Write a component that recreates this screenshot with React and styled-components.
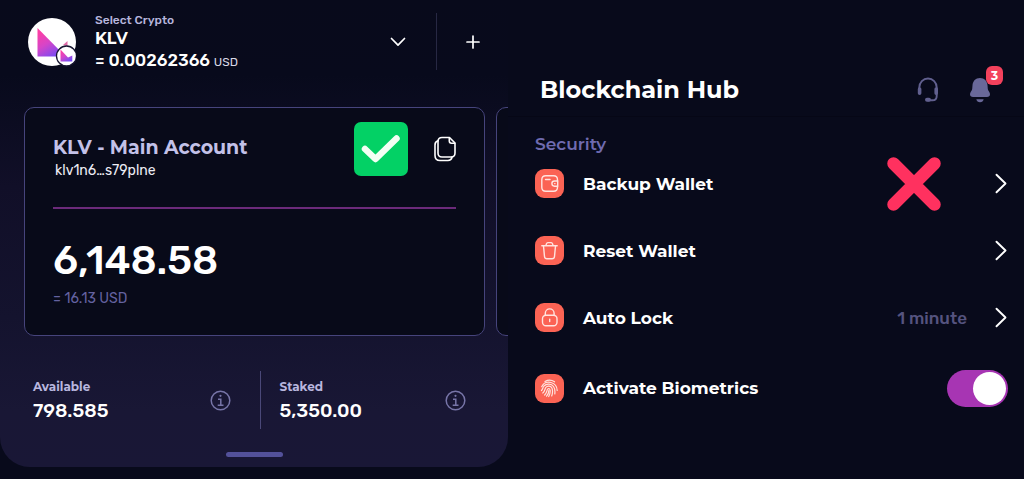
import React from 'react';
import styled, { createGlobalStyle } from 'styled-components';

const display = `"Montserrat", "Inter", "Open Sans", sans-serif`;
const body = `"Rubik", "Inter", "Roboto", sans-serif`;

const GlobalStyle = createGlobalStyle`
  *, *::before, *::after { box-sizing: border-box; }
  body { margin: 0; background: #080a1b; color: #fff; font-family: ${body}; }
  h1, h2, h3, p, ul, dl, dd { margin: 0; padding: 0; }
  ul { list-style: none; }
  svg { display: block; flex: none; }
  button {
    margin: 0; padding: 0; border: 0; background: none;
    color: inherit; font: inherit; text-align: left; cursor: pointer;
  }
`;

const Screens = styled.div`
  display: grid;
  grid-template-columns: 508fr 516fr;
  align-items: start;
  min-height: 100vh;
`;

const WalletPanel = styled.section`
  min-width: 0;
  border-radius: 0 0 30px 30px;
  background: linear-gradient(#080a1b 0%, #080a1c 16%, #110f28 40%, #14132e 68%, #191735 88%, #191736 100%);
`;

const CryptoBar = styled.header`
  display: flex;
  align-items: center;
  height: 83px;
  padding-left: 28px;
`;

const CryptoPicker = styled.button`
  flex: 1;
  display: flex;
  align-items: center;
  gap: 19px;
  padding-right: 30px;
`;

const CryptoText = styled.span`
  flex: 1;
  display: flex;
  flex-direction: column;
`;

const PickerLabel = styled.span`
  font-size: 12px;
  line-height: 18px;
  font-weight: 500;
  color: #b6b5dc;
`;

const Ticker = styled.span`
  font-family: ${display};
  font-size: 16px;
  line-height: 20px;
  font-weight: 700;
`;

const Price = styled.span`
  font-size: 17px;
  line-height: 22px;
  font-weight: 500;
`;

const Unit = styled.span`
  font-size: 12px;
  font-weight: 400;
  color: #d9d9e6;
`;

const AddButton = styled.button`
  display: flex;
  align-items: center;
  justify-content: center;
  width: 72px;
  height: 57px;
  border-left: 1px solid #272843;
`;

const Carousel = styled.div`
  display: flex;
  gap: 11px;
  padding: 24px 0 0 24px;
  overflow: hidden;
`;

const AccountCard = styled.article`
  flex: 0 0 calc(100% - 23px);
  min-height: 229px;
  padding: 7px 28px 14px;
  border: 1px solid #46447c;
  border-radius: 10px;
  background: #080a19;
`;

const CardTop = styled.div`
  display: flex;
  align-items: center;
  padding-bottom: 25px;
  border-bottom: 2px solid #6b2a7a;
`;

const AccountId = styled.div`
  flex: 1;
  padding-top: 21px;
`;

const AccountName = styled.h2`
  font-family: ${display};
  font-size: 19px;
  line-height: 24px;
  font-weight: 700;
  color: #c3c1e8;
`;

const Address = styled.p`
  padding-left: 2px;
  font-size: 14px;
  line-height: 22px;
  color: #ececf4;
`;

const CopyButton = styled.button`
  margin-left: 26px;
`;

const Balance = styled.p`
  padding-top: 28px;
  font-size: 40px;
  line-height: 48px;
  font-weight: 500;
`;

const Fiat = styled.p`
  padding-top: 4px;
  font-size: 14px;
  line-height: 20px;
  color: #6462a0;
`;

const Stats = styled.dl`
  display: flex;
  padding: 35px 42px 0 33px;
`;

const Stat = styled.div`
  flex: 1 1 ${p => (p.$divided ? 206 : 226)}px;
  display: flex;
  align-items: center;
  justify-content: space-between;
  height: 58px;
  padding: ${p => (p.$divided ? '0 0 0 19px' : '0 29px 0 0')};
  border-left: ${p => (p.$divided ? '1px solid #4a4878' : '0')};
`;

const StatLabel = styled.dt`
  font-family: ${display};
  font-size: 12px;
  line-height: 22px;
  font-weight: 700;
  color: #b9b7df;
`;

const StatValue = styled.dd`
  font-size: 19px;
  line-height: 26px;
  font-weight: 500;
`;

const Handle = styled.button`
  display: block;
  width: 57px;
  height: 5px;
  margin: 23px auto 0;
  border-radius: 3px;
  background: #53519a;
`;

const PanelFoot = styled.footer`
  padding-bottom: 10px;
`;

const HubPanel = styled.section`
  min-width: 0;
  padding-top: 64px;
`;

const HubBar = styled.header`
  display: flex;
  align-items: center;
  height: 53px;
  padding: 0 33px 0 32px;
  border-bottom: 1px solid #060716;
`;

const HubTitle = styled.h1`
  flex: 1;
  font-family: ${display};
  font-size: 24px;
  line-height: 32px;
  font-weight: 700;
`;

const BellButton = styled.button`
  position: relative;
  margin-left: 30px;
`;

const Badge = styled.span`
  position: absolute;
  top: -11px;
  right: -12px;
  width: 17px;
  height: 19px;
  border-radius: 6px;
  background: #f3415c;
  font-family: ${display};
  font-size: 12px;
  line-height: 19px;
  font-weight: 700;
  text-align: center;
`;

const SectionTitle = styled.h2`
  padding: 16px 27px 0;
  font-family: ${display};
  font-size: 17px;
  line-height: 22px;
  font-weight: 600;
  color: #6f6bb0;
`;

const Settings = styled.ul`
  padding: 0 16px 0 27px;
  margin-top: -5px;
`;

const SettingRow = styled.li`
  display: flex;
  align-items: center;
  height: ${p => (p.$tall ? 74 : 67)}px;
`;

const SettingButton = styled.button`
  flex: 1;
  display: flex;
  align-items: center;
`;

const IconTile = styled.span`
  display: flex;
  align-items: center;
  justify-content: center;
  width: 29px;
  height: 29px;
  margin-right: 19px;
  border-radius: 9px;
  background: #fb6354;
`;

const SettingName = styled.span`
  flex: 1;
  font-family: ${display};
  font-size: 17px;
  line-height: 24px;
  font-weight: 700;
`;

const SettingLabel = styled(SettingName).attrs({ as: 'label' })``;

const SettingValue = styled.span`
  margin-right: 28px;
  font-size: 17px;
  line-height: 24px;
  font-weight: 500;
  color: #55537f;
`;

const CrossSlot = styled.span`
  margin-right: 54px;
`;

const Toggle = styled.input`
  appearance: none;
  display: flex;
  align-items: center;
  justify-content: flex-end;
  width: 61px;
  height: 37px;
  margin: 0;
  padding: 2px;
  border-radius: 19px;
  background: #a735b3;
  cursor: pointer;
  &::before {
    content: '';
    width: 33px;
    height: 33px;
    border-radius: 50%;
    background: #fff;
  }
  &:not(:checked) { justify-content: flex-start; background: #35345a; }
`;

const CoinLogo = () => (
  <svg width="48" height="50" viewBox="0 0 48 50" aria-hidden="true">
    <defs>
      <linearGradient id="klv" x1="0" y1="0" x2="0.6" y2="1">
        <stop offset="0.15" stopColor="#fb3fa6" />
        <stop offset="0.55" stopColor="#d645c8" />
        <stop offset="1" stopColor="#7a4bf2" />
      </linearGradient>
    </defs>
    <circle cx="24" cy="25" r="24" fill="#fff" />
    <path d="M9.500 11 37.500 39.500H9.500Z" fill="url(#klv)" />
    <path d="M35 28 39.500 24V29Z" fill="#e06ba8" />
    <circle cx="38.500" cy="39" r="10" fill="#fff" stroke="#171530" strokeWidth="1.300" />
    <path d="M32.500 32.500 40 40.500 44.300 38.500V44.500H32.500Z" fill="url(#klv)" />
  </svg>
);

const ChevronDown = () => (
  <svg width="16" height="10" viewBox="0 0 16 10" fill="none" stroke="#fff" strokeWidth="1.700" strokeLinecap="round" strokeLinejoin="round" aria-hidden="true">
    <path d="M1.500 1.500 8 8.200 14.500 1.500" />
  </svg>
);

const ChevronRight = () => (
  <svg width="13" height="21" viewBox="0 0 13 21" fill="none" stroke="#fff" strokeWidth="1.900" strokeLinecap="round" strokeLinejoin="round" aria-hidden="true">
    <path d="M1.500 1.700 10.500 10.500 1.500 19.300" />
  </svg>
);

const Plus = () => (
  <svg width="14" height="14" viewBox="0 0 14 14" stroke="#fff" strokeWidth="1.700" strokeLinecap="round" aria-hidden="true">
    <path d="M7 1V13M1 7H13" />
  </svg>
);

const CheckMark = () => (
  <svg width="54" height="54" viewBox="0 0 54 54" fill="none" role="img" aria-label="Works">
    <rect width="54" height="54" rx="7" fill="#03d165" />
    <path d="M11 27 21.500 37 42.500 16.500" stroke="#f3fff4" strokeWidth="6.500" strokeLinecap="round" strokeLinejoin="round" />
  </svg>
);

const CrossMark = () => (
  <svg width="54" height="54" viewBox="0 0 54 54" fill="none" role="img" aria-label="Does not work">
    <path d="M6.500 6.500 47.500 47.500M47.500 6.500 6.500 47.500" stroke="#ff315f" strokeWidth="12.500" strokeLinecap="round" />
  </svg>
);

const CopyIcon = () => (
  <svg width="22" height="26" viewBox="0 0 22 26" fill="none" stroke="#fff" strokeWidth="1.600" strokeLinejoin="round" strokeLinecap="round" aria-hidden="true">
    <path d="M8 1.500H15.500L21 7V17Q21 21 17 21H8Q4 21 4 17V5.500Q4 1.500 8 1.500Z" />
    <path d="M15.300 1.800V5Q15.300 7.200 17.500 7.200H20.700" />
    <path d="M4 4.800Q1 5.500 1 9V19.500Q1 24.500 6 24.500H14Q17.300 24.500 18 21.400" />
  </svg>
);

const InfoIcon = () => (
  <svg width="21" height="21" viewBox="0 0 21 21" fill="none" stroke="#7775a8" strokeWidth="1.500" aria-hidden="true">
    <circle cx="10.500" cy="10.500" r="9.300" />
    <path d="M8 9.200H10.800V15.300M7.700 15.300H13.500" />
    <circle cx="10.500" cy="5.800" r="1.100" fill="#7775a8" stroke="none" />
  </svg>
);

const Headset = () => (
  <svg width="22" height="26" viewBox="0 0 22 26" fill="none" stroke="#61608f" strokeWidth="1.900" strokeLinecap="round" aria-hidden="true">
    <path d="M2.300 13V10.500A8.700 9 0 0 1 19.700 10.500V19Q19.700 23.300 15.500 23.300H11" />
    <path d="M2.600 12V16.300M19.200 12V16.300" strokeWidth="3.600" />
    <path d="M10 22.700H12" strokeWidth="4" />
  </svg>
);

const Bell = () => (
  <svg width="22" height="26" viewBox="0 0 22 26" fill="#696899" aria-hidden="true">
    <path d="M11 1C6.500 1 3.800 4.200 3.500 8.300L3.200 12Q3 13.300 2 14.500 1 16 1 17.300C1 19 2.200 20 4 20H18C19.800 20 21 19 21 17.300Q21 16 20 14.500 19 13.300 18.800 12L18.500 8.300C18.200 4.200 15.500 1 11 1Z" />
    <path d="M7.300 22.200H14.700Q14 25.200 11 25.200T7.300 22.200Z" />
  </svg>
);

const lineIcon = {
  width: 19, height: 19, viewBox: '0 0 19 19', fill: 'none', stroke: '#ffe4df',
  strokeWidth: 1.4, strokeLinecap: 'round', strokeLinejoin: 'round', 'aria-hidden': true,
};

const WalletIcon = () => (
  <svg {...lineIcon}>
    <path d="M17.500 7V5.800Q17.500 1.800 13.500 1.800H5.800Q1.800 1.800 1.800 5.800V13.200Q1.800 17.200 5.800 17.200H13.500Q17.500 17.200 17.500 13.200V12.300" />
    <path d="M17.700 7H14.500A2.600 2.600 0 0 0 14.500 12.200H17.700V7M14.700 9.600H15M5.500 5.500H10" />
  </svg>
);

const TrashIcon = () => (
  <svg {...lineIcon}>
    <path d="M1.800 4.800H17.200M6 4.500Q6.300 1.600 8 1.600H11Q12.700 1.600 13 4.500M3.500 5 4.500 15.500Q4.700 17.700 7 17.700H12Q14.300 17.700 14.500 15.500L15.500 5" />
  </svg>
);

const LockIcon = () => (
  <svg {...lineIcon}>
    <rect x="2.500" y="7.200" width="14.500" height="10.500" rx="3.500" />
    <path d="M5.300 7V5.300A4.400 4.400 0 0 1 14.100 5.300V7M9.700 11.300V13.500" />
  </svg>
);

const FingerprintIcon = () => (
  <svg {...lineIcon}>
    <path d="M5 2.600A9 9 0 0 1 14.500 2.800M1.700 7.700C3.500 3.300 8 2.700 11 3.500 15 4.500 17 7.300 17.200 11.500M1.500 11.500C2.700 10.300 2.800 8.500 4 7 6.500 4.200 11.500 4.700 13.500 7.500 15 9.700 15.200 12 14.800 15M2.800 14C5 12.300 4.700 10 5.800 8.500 7.500 6.200 11 6.900 12 9.300 13 12 12.500 14.700 11.700 17M4.700 16C7 13.700 6.700 11.700 7.500 10.300 8.300 9 9.800 9.500 10.100 11 10.500 13.300 9.700 15.500 8.700 17.500M8.800 11.500C8.900 13.700 8 15.500 6.600 17.200" strokeWidth="1.200" />
  </svg>
);

const settings = [
  { name: 'Backup Wallet', Icon: WalletIcon, crossed: true },
  { name: 'Reset Wallet', Icon: TrashIcon },
  { name: 'Auto Lock', Icon: LockIcon, value: '1 minute' },
];

const stats = [
  { label: 'Available', value: '798.585' },
  { label: 'Staked', value: '5,350.00' },
];

export default function App() {
  return (
    <>
      <GlobalStyle />
      <Screens>
        <WalletPanel>
          <CryptoBar>
            <CryptoPicker>
              <CoinLogo />
              <CryptoText>
                <PickerLabel>Select Crypto</PickerLabel>
                <Ticker>KLV</Ticker>
                <Price>= 0.00262366 <Unit>USD</Unit></Price>
              </CryptoText>
              <ChevronDown />
            </CryptoPicker>
            <AddButton aria-label="Add crypto"><Plus /></AddButton>
          </CryptoBar>
          <Carousel>
            <AccountCard>
              <CardTop>
                <AccountId>
                  <AccountName>KLV - Main Account</AccountName>
                  <Address>klv1n6…s79plne</Address>
                </AccountId>
                <CheckMark />
                <CopyButton aria-label="Copy address"><CopyIcon /></CopyButton>
              </CardTop>
              <Balance>6,148.58</Balance>
              <Fiat>= 16.13 USD</Fiat>
            </AccountCard>
            <AccountCard aria-hidden="true" />
          </Carousel>
          <Stats>
            {stats.map(({ label, value }, i) => (
              <Stat key={label} $divided={i > 0}>
                <div>
                  <StatLabel>{label}</StatLabel>
                  <StatValue>{value}</StatValue>
                </div>
                <button aria-label={`About ${label}`}><InfoIcon /></button>
              </Stat>
            ))}
          </Stats>
          <PanelFoot>
            <Handle aria-label="Expand" />
          </PanelFoot>
        </WalletPanel>

        <HubPanel>
          <HubBar>
            <HubTitle>Blockchain Hub</HubTitle>
            <button aria-label="Support"><Headset /></button>
            <BellButton aria-label="Notifications">
              <Bell />
              <Badge>3</Badge>
            </BellButton>
          </HubBar>
          <SectionTitle>Security</SectionTitle>
          <Settings>
            {settings.map(({ name, Icon, value, crossed }) => (
              <SettingRow key={name}>
                <SettingButton>
                  <IconTile><Icon /></IconTile>
                  <SettingName>{name}</SettingName>
                  {crossed && <CrossSlot><CrossMark /></CrossSlot>}
                  {value && <SettingValue>{value}</SettingValue>}
                  <ChevronRight />
                </SettingButton>
              </SettingRow>
            ))}
            <SettingRow $tall>
              <IconTile><FingerprintIcon /></IconTile>
              <SettingLabel htmlFor="biometrics">Activate Biometrics</SettingLabel>
              <Toggle id="biometrics" type="checkbox" role="switch" defaultChecked />
            </SettingRow>
          </Settings>
        </HubPanel>
      </Screens>
    </>
  );
}
